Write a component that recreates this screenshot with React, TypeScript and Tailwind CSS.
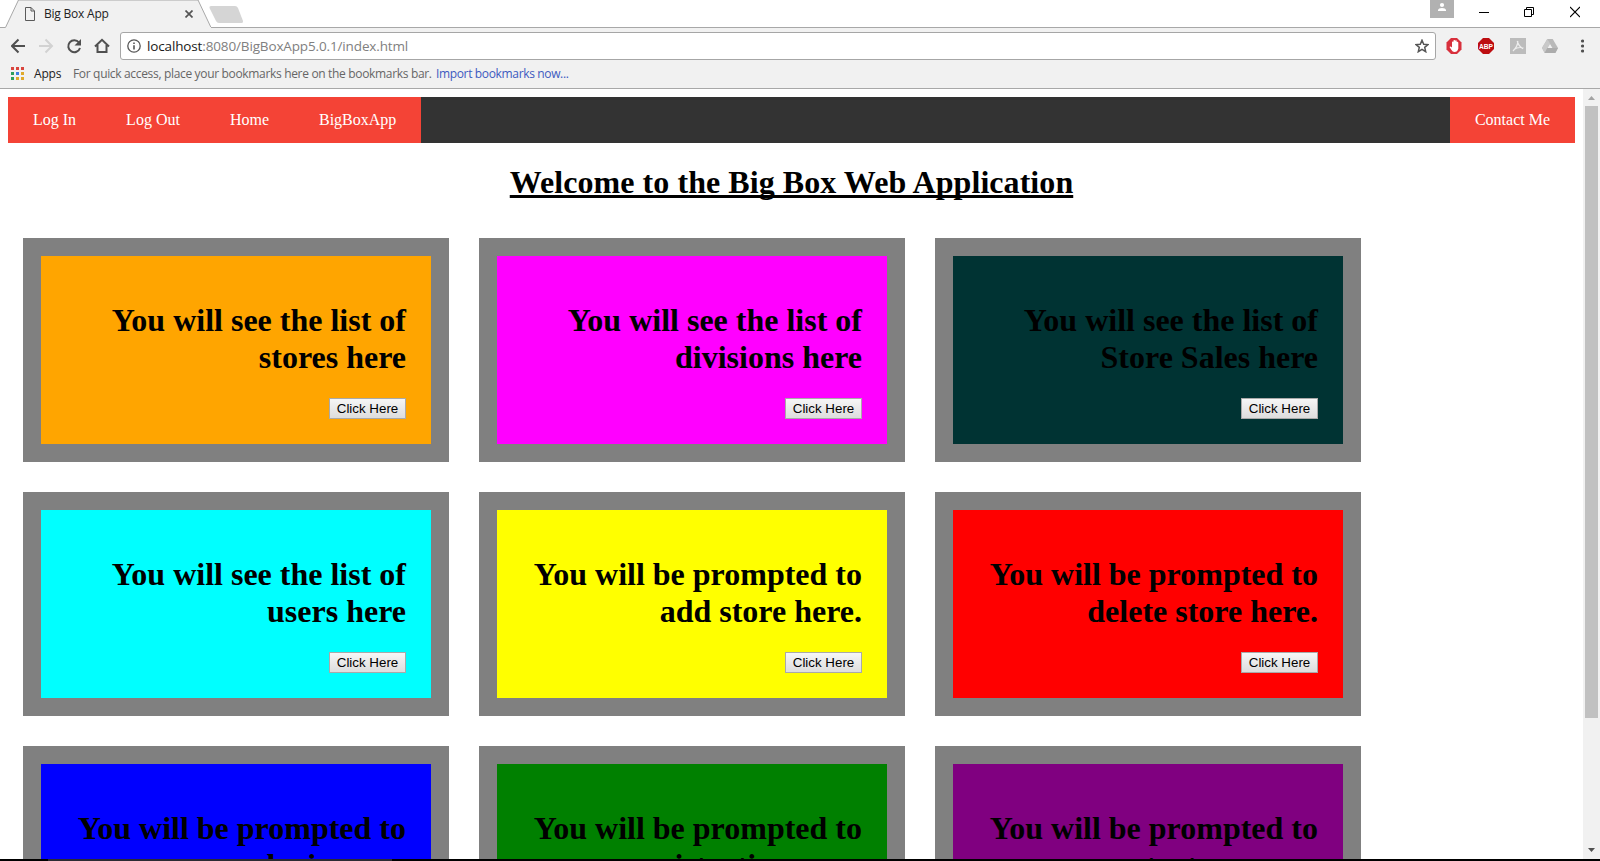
import type { ReactNode } from "react";

type Card = { text: string; color: string };

const cards: Card[] = [
  { text: "You will see the list of stores here", color: "bg-[#ffa500]" },
  { text: "You will see the list of divisions here", color: "bg-[#ff00ff]" },
  { text: "You will see the list of Store Sales here", color: "bg-[#003333]" },
  { text: "You will see the list of users here", color: "bg-[#00ffff]" },
  { text: "You will be prompted to add store here.", color: "bg-[#ffff00]" },
  { text: "You will be prompted to delete store here.", color: "bg-[#ff0000]" },
  { text: "You will be prompted to login page", color: "bg-[#0000ff]" },
  { text: "You will be prompted to registration page", color: "bg-[#008000]" },
  { text: "You will be prompted to contact me page", color: "bg-[#800080]" },
];

const appColors = [
  "bg-[#d9453d]", "bg-[#d9453d]", "bg-[#d9453d]",
  "bg-[#2f9e5b]", "bg-[#3f7fe0]", "bg-[#e0a92a]",
  "bg-[#2f9e5b]", "bg-[#e0a92a]", "bg-[#e0a92a]",
];

function TitleBar() {
  return (
    <div className="flex h-7 shrink-0 bg-white">
      <div className="relative h-7 w-[250px] shrink-0">
        <svg className="absolute inset-0" width="250" height="28" viewBox="0 0 250 28">
          <path d="M0 27.5H5.5L18.5 0H198L211 27.5H250" fill="#f1f1f1" stroke="#a8a8a8" />
          <rect x="6" y="27" width="205" height="1" fill="#f1f1f1" />
          <path d="M211 6H235Q237 6 238 8L243 21Q243.500 23 241.500 23H219Q217 23 216 21L209.500 8Q209 6 211 6Z" fill="#d5d5d5" />
        </svg>
        <div className="relative flex h-7 items-center pl-[25px]">
          <svg width="10" height="14" viewBox="0 0 10 14" fill="none" stroke="#5a5a5a">
            <path d="M.5.5H6L9.500 4V13.500H.5ZM6 .5V4H9.500" />
          </svg>
          <span className="ml-[9px] w-[141px] text-[12px] leading-none tracking-[-0.22px] text-[#222]">Big Box App</span>
          <svg width="8" height="8" viewBox="0 0 8 8" stroke="#555" strokeWidth="1.7">
            <path d="M.5.5 7.500 7.500M7.500.5.5 7.500" />
          </svg>
        </div>
      </div>
      <div className="flex flex-1 justify-end border-b border-[#a8a8a8]">
        <div className="mr-[25px] flex h-[18px] w-6 justify-center bg-[#b1b1b1]">
          <svg width="10" height="12" viewBox="0 0 10 12" fill="#fff">
            <circle cx="5" cy="5" r="2.100" />
            <path d="M1 11V10Q1.500 8 5 8T9 10V11Z" />
          </svg>
        </div>
        <svg className="mr-[35px]" width="10" height="24" viewBox="0 0 10 24"><path d="M0 12.500H10" stroke="#000" /></svg>
        <svg className="mr-9" width="10" height="24" viewBox="0 0 10 24" fill="none" stroke="#000">
          <path d="M.5 9.500H7.500V16.500H.5ZM2.500 9.500V7.500H9.500V14.500H7.500" />
        </svg>
        <svg className="mr-5" width="10" height="24" viewBox="0 0 10 24" stroke="#000" strokeWidth="1.100">
          <path d="M0 7 10 17M10 7 0 17" />
        </svg>
      </div>
    </div>
  );
}

function Toolbar() {
  return (
    <div className="flex h-9 shrink-0 items-center">
      <svg className="ml-[11px] shrink-0" width="100" height="16" viewBox="0 0 100 16" fill="none" strokeWidth="2">
        <path d="M14 8H1.500M7.500 1.500 1 8l6.500 6.500" stroke="#505050" />
        <path d="M28 8H40.500M34.500 1.500 41 8l-6.500 6.500" stroke="#d2d2d2" />
        <path d="M68 4.500A6 6 0 1 0 69 10" stroke="#505050" />
        <path d="M70 1V7.500H63.500Z" fill="#505050" />
        <path d="M84 8.500 91 1.800 98 8.500M86.500 7V14H95.500V7" stroke="#505050" />
      </svg>
      <div className="ml-[9px] flex h-7 flex-1 items-center rounded-[3px] border border-[#a6a6a6] bg-white pr-[6px] pl-[6px]">
        <svg width="14" height="14" viewBox="0 0 14 14" fill="none" stroke="#555" strokeWidth="1.300">
          <circle cx="7" cy="7" r="6.200" />
          <path d="M7 6.200V10.500M7 3.500V5" strokeWidth="1.600" />
        </svg>
        <span className="ml-[6px] flex-1 pt-[2px] text-[13.5px] leading-none tracking-[-0.14px] text-[#808080]">
          <span className="text-[#1a1a1a]">localhost</span>:8080/BigBoxApp5.0.1/index.html
        </span>
        <svg width="14" height="14" viewBox="0 0 14 14" fill="none" stroke="#555" strokeWidth="1.500">
          <path d="M7 1.200 8.700 5.200 13 5.600 9.700 8.400 10.700 12.700 7 10.400 3.300 12.700 4.300 8.400 1 5.600 5.300 5.200Z" />
        </svg>
      </div>
      <div className="flex w-[164px] shrink-0 items-center pl-[10px]">
        <svg width="16" height="16" viewBox="0 0 16 16">
          <path d="M5 0H11L15.500 4.500V11.500L11 16H5L.5 11.500V4.500Z" fill="#d8303c" />
          <path d="M6 7V4.300Q6 3.500 6.700 3.500T7.400 4.300V3Q7.500 2 8.300 2T9.200 3V2.800Q9.500 2 10.200 2.300T10.700 3.500V4Q12.300 3.300 12.300 5V10.500Q11.500 14 8.500 14Q6.500 14 5.500 12L3.500 9Q4.200 7.800 6 9.500Z" fill="#fff" />
        </svg>
        <svg className="ml-4" width="16" height="16" viewBox="0 0 16 16">
          <path d="M5 0H11L16 5V11L11 16H5L0 11V5Z" fill="#bd0d10" />
          <text x="8" y="11" textAnchor="middle" textLength="14" lengthAdjust="spacingAndGlyphs" fontSize="8" fontWeight="700" fontFamily="Liberation Sans, sans-serif" fill="#fff">ABP</text>
        </svg>
        <svg className="ml-4" width="16" height="16" viewBox="0 0 16 16">
          <rect width="16" height="16" fill="#bcbcbc" />
          <path d="M7.200 3Q8.500 8 13 10.800M7.800 3Q8 8 3 13M4 11.500Q8 8.500 13.500 10" fill="none" stroke="#eee" strokeWidth="1.200" />
        </svg>
        <svg className="ml-4" width="16" height="14" viewBox="0 0 16 14">
          <path d="M5.300 0H10.700L16 9 13.300 14H2.700L0 9Z" fill="#b9b9b9" />
          <path d="M5.300 0 8 4.500 2.700 14 0 9Z" fill="#c9c9c9" />
          <path d="M5.300 9H16L13.300 14H2.700Z" fill="#acacac" />
          <path d="M8 5 10.400 9H5.600Z" fill="#f1f1f1" />
        </svg>
        <svg className="ml-[22px]" width="4" height="14" viewBox="0 0 4 14" fill="#505050">
          <circle cx="2.500" cy="2" r="1.600" /><circle cx="2.500" cy="7" r="1.600" /><circle cx="2.500" cy="12" r="1.600" />
        </svg>
      </div>
    </div>
  );
}

function BookmarksBar() {
  return (
    <div className="flex h-[25px] shrink-0 items-start border-b border-[#a8a8a8] pt-[3px] pl-[11px] text-[12px] leading-[14px]">
      <div className="grid grid-cols-3 gap-[2px]">
        {appColors.map((c, i) => (
          <span key={i} className={`size-[3px] ${c}`} />
        ))}
      </div>
      <span className="ml-[10px] w-[39px] tracking-[-0.2px] text-[#222]">Apps</span>
      <span className="w-[363px] tracking-[-0.33px] whitespace-nowrap text-[#666]">
        For quick access, place your bookmarks here on the bookmarks bar.
      </span>
      <span className="tracking-[-0.35px] whitespace-nowrap text-[#3d5ac0]">Import bookmarks now...</span>
    </div>
  );
}

function NavLink({ children }: { children: ReactNode }) {
  return <a className="bg-[#f44336] px-[25px] py-3.5 text-[16px] leading-[18px] text-white">{children}</a>;
}

function Scrollbar() {
  return (
    <div className="flex w-[17px] shrink-0 flex-col items-center bg-[#f1f1f1]">
      <svg className="shrink-0" width="17" height="17" viewBox="0 0 17 17"><path d="M5 11 8.500 7 12 11Z" fill="#a3a3a3" /></svg>
      <div className="h-[612px] w-[13px] bg-[#c1c1c1]" />
      <svg className="mt-auto shrink-0" width="17" height="17" viewBox="0 0 17 17"><path d="M5 6 8.500 10 12 6Z" fill="#505050" /></svg>
    </div>
  );
}

function BoxCard({ text, color }: Card) {
  return (
    <div className={`flex h-[224px] w-[426px] flex-col items-end border-[18px] border-[#808080] px-[25px] pt-[46px] ${color}`}>
      <h1 className="text-right text-[32px] leading-[37px] font-bold text-black">{text}</h1>
      <button className="mt-[22px] h-[21px] w-[77px] border border-[#a9a9a9] bg-gradient-to-b from-[#f6f6f6] to-[#dddddd] font-['Liberation_Sans',sans-serif] text-[13.333px] leading-[15px] whitespace-nowrap text-black">
        Click Here
      </button>
    </div>
  );
}

export default function App() {
  return (
    <div className="flex h-[861px] w-[1600px] flex-col overflow-hidden bg-white">
      <header className="flex h-[89px] shrink-0 flex-col bg-[#f1f1f1] font-['Open_Sans','Noto_Sans',sans-serif]">
        <TitleBar />
        <Toolbar />
        <BookmarksBar />
      </header>
      <div className="flex h-[770px] shrink-0 overflow-hidden">
        <main className="flex-1 px-2 pt-2 font-['Liberation_Serif',serif]">
          <nav className="flex h-[46px] bg-[#333333]">
            <NavLink>Log In</NavLink>
            <NavLink>Log Out</NavLink>
            <NavLink>Home</NavLink>
            <NavLink>BigBoxApp</NavLink>
            <div className="flex-1" />
            <NavLink>Contact Me</NavLink>
          </nav>
          <h1 className="mt-[21px] text-center text-[32px] leading-[37px] font-bold tracking-[0.06px] text-black underline decoration-[3px] underline-offset-[2px] [text-decoration-skip-ink:none]">
            Welcome to the Big Box Web Application
          </h1>
          <div className="mt-[37px] ml-[15px] grid grid-cols-[426px_426px_426px] gap-[30px]">
            {cards.map((c) => (
              <BoxCard key={c.text} {...c} />
            ))}
          </div>
        </main>
        <Scrollbar />
      </div>
      <footer className="h-[2px] shrink-0 bg-black pl-12">
        <div className="h-[2px] w-[344px] bg-[#2b2b33]" />
      </footer>
    </div>
  );
}
